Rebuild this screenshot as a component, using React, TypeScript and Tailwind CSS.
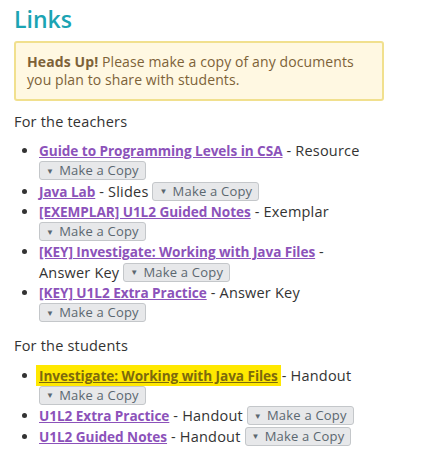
const font = { fontFamily: '"Open Sans", "Liberation Sans", sans-serif' };

function CopyButton() {
  return (
    <button
      type="button"
      className="inline-flex h-[19px] items-center gap-[5px] rounded-[3px] border border-[#c4c7ca] bg-[#e7e8ea] px-[6px] align-top text-[13px] leading-none text-[#5b6770]"
    >
      <span className="text-[8px] leading-none">▼</span>
      <span>Make a Copy</span>
    </button>
  );
}

type Item = { title: string; kind: string; highlight?: boolean };

const teachers: Item[] = [
  { title: "Guide to Programming Levels in CSA", kind: "Resource" },
  { title: "Java Lab", kind: "Slides" },
  { title: "[EXEMPLAR] U1L2 Guided Notes", kind: "Exemplar" },
  { title: "[KEY] Investigate: Working with Java Files", kind: "Answer Key" },
  { title: "[KEY] U1L2 Extra Practice", kind: "Answer Key" },
];

const students: Item[] = [
  { title: "Investigate: Working with Java Files", kind: "Handout", highlight: true },
  { title: "U1L2 Extra Practice", kind: "Handout" },
  { title: "U1L2 Guided Notes", kind: "Handout" },
];

function ResourceList({ items }: { items: Item[] }) {
  return (
    <ul className="list-disc pl-[25px] marker:text-[#333]">
      {items.map((it) => (
        <li key={it.title} className="leading-[20.3px]">
          <a
            href="#"
            className={`text-[13.6px] font-bold tracking-[-0.05px] underline ${
              it.highlight ? "-mx-[3px] bg-[#ffe800] px-[3px] py-px text-[#7d6a0c]" : "text-[#8c52ba]"
            }`}
          >
            {it.title}
          </a>{" "}
          - <span className="whitespace-nowrap">{it.kind}</span> <CopyButton />
        </li>
      ))}
    </ul>
  );
}

export default function App() {
  return (
    <div className="min-h-screen bg-white px-[14px] pt-[3px] text-[14.5px] tracking-[0.2px] text-[#333]" style={font}>
      <div className="w-[370px]">
        <h2 className="text-[23px] font-semibold leading-[32px] tracking-normal text-[#1ba4b3]">Links</h2>
        <div className="mt-[6px] rounded-[3px] border-2 border-[#f1e08e] bg-[#fff8e2] py-[10px] pl-[11px] pr-[28px] text-[14px] leading-[18px] tracking-[0.1px] text-[#7d6238]">
          <strong>Heads Up!</strong> Please make a copy of any documents you plan to share with students.
        </div>
        <p className="mt-[11px] leading-[20px]">For the teachers</p>
        <div className="mt-[9px]">
          <ResourceList items={teachers} />
        </div>
        <p className="mt-[12px] leading-[20px]">For the students</p>
        <div className="mt-[10px]">
          <ResourceList items={students} />
        </div>
      </div>
    </div>
  );
}
